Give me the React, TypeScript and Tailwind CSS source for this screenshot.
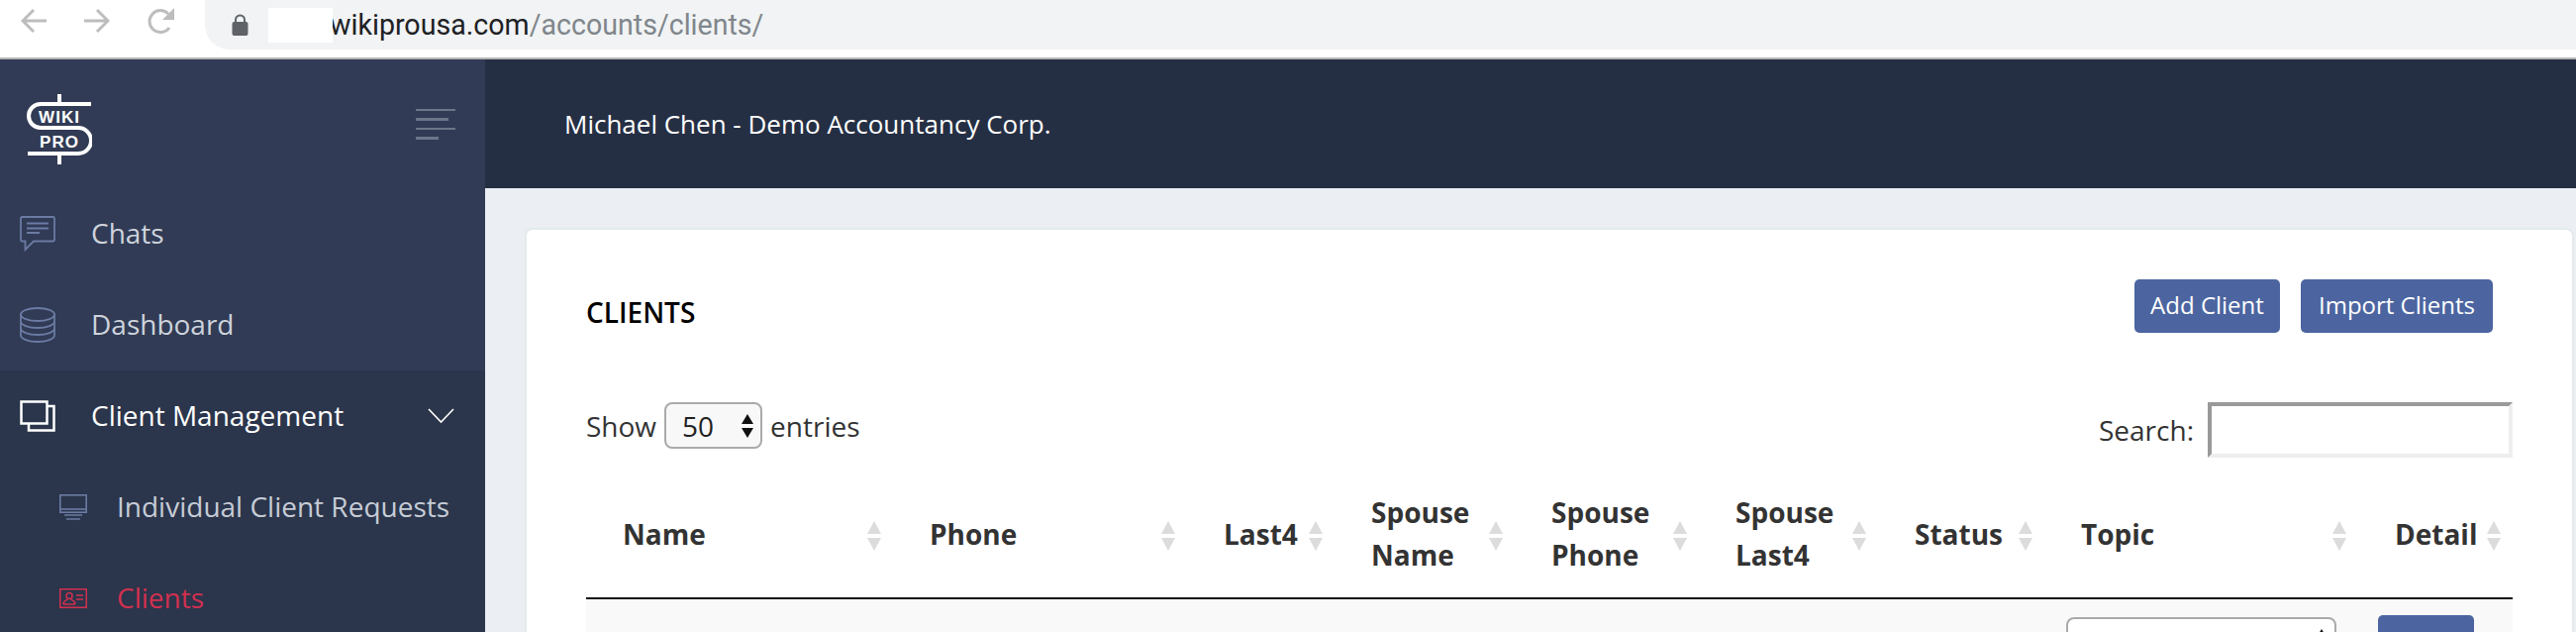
import React from 'react';

const columns = [
  { label: ['Name'], width: 'w-[310px]' },
  { label: ['Phone'], width: 'w-[297px]' },
  { label: ['Last4'], width: 'w-[149px]' },
  { label: ['Spouse', 'Name'], width: 'w-[182px]' },
  { label: ['Spouse', 'Phone'], width: 'w-[186px]' },
  { label: ['Spouse', 'Last4'], width: 'w-[181px]' },
  { label: ['Status'], width: 'w-[168px]' },
  { label: ['Topic'], width: 'w-[317px]' },
  { label: ['Detail'], width: 'w-[156px]' },
];

const SortIcon = () => (
  <svg className="absolute right-[10px] top-[31px]" width="18" height="30" viewBox="0 0 18 30">
    <path d="M9 0 L16 13 H2 Z" fill="#dcdcdc" />
    <path d="M9 30 L16 17 H2 Z" fill="#dcdcdc" />
  </svg>
);

const ChatIcon = () => (
  <svg width="36" height="36" viewBox="0 0 36 36" fill="none" stroke="#6b7ba3" strokeWidth="1.8">
    <path d="M2.5 1 H33.5 Q35 1 35 2.5 V24 Q35 25.5 33.5 25.5 H14 L5.5 34 V25.5 H2.5 Q1 25.5 1 24 V2.5 Q1 1 2.5 1 Z" />
    <path d="M7 7.5 H29 M7 12.5 H29 M7 17 H20" />
  </svg>
);

const DatabaseIcon = () => (
  <svg width="36" height="36" viewBox="0 0 36 36" fill="none" stroke="#6b7ba3" strokeWidth="1.8">
    <ellipse cx="18" cy="7.5" rx="17" ry="6.5" />
    <path d="M1 7.5 V28.5 C1 32 8.5 35 18 35 S35 32 35 28.5 V7.5" />
    <path d="M1 14.5 C1 18 8.5 21 18 21 S35 18 35 14.5" />
    <path d="M1 21.5 C1 25 8.5 28 18 28 S35 25 35 21.5" />
  </svg>
);

const MonitorIcon = () => (
  <svg width="28" height="26" viewBox="0 0 28 26" fill="none" stroke="#6b7ba3" strokeWidth="1.6">
    <rect x="0.8" y="0.8" width="26.4" height="17.4" />
    <path d="M0.8 15 H27.2" />
    <path d="M5 21 H23 M7 25 H21" />
  </svg>
);

const CopyIcon = () => (
  <svg width="36" height="32" viewBox="0 0 36 32" fill="none" stroke="#fff" strokeWidth="2.5">
    <rect x="1.5" y="1.5" width="26" height="22" />
    <path d="M28 6 H34.5 V30.5 H9 V24" />
  </svg>
);

const IdCardIcon = () => (
  <svg width="28" height="20" viewBox="0 0 28 20" fill="none" stroke="#d2304f" strokeWidth="1.5">
    <rect x="0.75" y="0.75" width="26.5" height="18.5" />
    <circle cx="10" cy="7.5" r="3" />
    <path d="M4 16 C4 12 7 12 8.5 11 M16 16 C16 12 13 12 11.5 11 M4 16 H16" />
    <path d="M17 7 H24 M17 11 H24" />
  </svg>
);

const Logo = () => (
  <svg width="66" height="72" viewBox="0 0 66 72" className="ml-[27px] mt-[12px]">
    <path d="M33 0 V10 M33 61 V71" stroke="#fff" strokeWidth="4" fill="none" />
    <path d="M65 10 H14 A12 12 0 0 0 14 34 H52 A13 13 0 0 1 52 60 H1" stroke="#fff" strokeWidth="4" fill="none" />
    <text x="33" y="29" textAnchor="middle" fill="#fff" fontSize="17" letterSpacing="1" fontWeight="700" fontFamily="'Liberation Sans', sans-serif">WIKI</text>
    <text x="33" y="54" textAnchor="middle" fill="#fff" fontSize="17" letterSpacing="1" fontWeight="700" fontFamily="'Liberation Sans', sans-serif">PRO</text>
  </svg>
);

export default function App() {
  return (
    <div className="h-[638px] w-[2602px] overflow-hidden bg-[#ebeef3] font-['Open_Sans',sans-serif] text-[28px] text-[#333]">
      {/* browser chrome */}
      <div className="flex h-[60px] items-start border-b-2 border-[#b5b5b5] bg-white">
        <div className="flex h-[42px] items-center pl-[21px] text-[#bdbdbd]">
          <svg width="26" height="26" viewBox="0 0 26 26" fill="none" stroke="currentColor" strokeWidth="3">
            <path d="M26 13 H2 M13 2 L2 13 L13 24" />
          </svg>
          <svg className="ml-[38px]" width="26" height="26" viewBox="0 0 26 26" fill="none" stroke="currentColor" strokeWidth="3">
            <path d="M0 13 H24 M13 2 L24 13 L13 24" />
          </svg>
          <svg className="ml-[38px]" width="27" height="27" viewBox="0 0 27 27" fill="none">
            <path d="M22 20 A11 11 0 1 1 21 6" stroke="currentColor" strokeWidth="3" />
            <path d="M27 0 V12 H15 Z" fill="currentColor" />
          </svg>
        </div>
        <div className="ml-[31px] flex h-[50px] flex-1 items-center rounded-bl-[25px] bg-[#f1f3f4] pl-[27px]">
          <svg width="17" height="22" viewBox="0 0 17 22" fill="#5f6368">
            <rect x="0.5" y="8" width="16" height="14" rx="2" />
            <path d="M4 9 V6 A4.5 4.5 0 0 1 13 6 V9" fill="none" stroke="#5f6368" strokeWidth="2" />
          </svg>
          <div className="relative z-10 ml-[20px] h-[35px] w-[65px] bg-white" />
          <span className="-ml-[3px] font-['Roboto',sans-serif] text-[28.6px] text-[#202124]">
            wikiprousa.com<span className="text-[#80868b]">/accounts/clients/</span>
          </span>
        </div>
      </div>

      <div className="flex h-[578px]">
        {/* sidebar */}
        <aside className="w-[490px] shrink-0 bg-[#313b55]">
          <div className="flex h-[130px] items-center justify-between pr-[30px]">
            <Logo />
            <div className="flex w-[40px] flex-col gap-[7px]">
              <div className="h-[2.5px] w-[40px] bg-[#6d7589]" />
              <div className="h-[2.5px] w-[33px] bg-[#6d7589]" />
              <div className="h-[2.5px] w-[40px] bg-[#6d7589]" />
              <div className="h-[2.5px] w-[23px] bg-[#6d7589]" />
            </div>
          </div>
          <div className="flex h-[92px] items-center pl-[20px] text-[#ced3dc]">
            <ChatIcon />
            <span className="-mt-[2px] ml-[36px]">Chats</span>
          </div>
          <div className="flex h-[92px] items-center pl-[20px] text-[#ced3dc]">
            <DatabaseIcon />
            <span className="-mt-[2px] ml-[36px]">Dashboard</span>
          </div>
          <div className="bg-[#2b354b]">
            <div className="flex h-[92px] items-center pl-[20px] pr-[31px] text-white">
              <CopyIcon />
              <span className="-mt-[2px] ml-[36px] flex-1">Client Management</span>
              <svg width="27" height="16" viewBox="0 0 27 16" fill="none" stroke="#fff" strokeWidth="1.6">
                <path d="M1 1 L13.5 14 L26 1" />
              </svg>
            </div>
            <div className="flex h-[92px] items-center pl-[60px] text-[#c6ccd6]">
              <MonitorIcon />
              <span className="-mt-[2px] ml-[30px]">Individual Client Requests</span>
            </div>
            <div className="flex h-[92px] items-center pl-[60px] text-[#d2304f]">
              <IdCardIcon />
              <span className="-mt-[2px] ml-[30px]">Clients</span>
            </div>
          </div>
        </aside>

        <main className="min-w-0 flex-1">
          <div className="flex h-[130px] items-center bg-[#252f44] pl-[80px] text-[26px] text-white">
            Michael Chen - Demo Accountancy Corp.
          </div>
          {/* card */}
          <div className="ml-[40px] mr-[2px] mt-[40px] h-[500px] rounded-[8px] border-2 border-[#e4ebec] bg-white px-[60px] pt-[50px]">
            <div className="flex h-[54px] items-center justify-between pr-[20px]">
              <h2 className="mt-[12px] font-semibold text-black">CLIENTS</h2>
              <div className="flex gap-[21px] text-[24px] text-white">
                <button className="h-[54px] w-[147px] rounded-[5px] bg-[#4c65a0] pb-[3px]">Add Client</button>
                <button className="h-[54px] w-[194px] rounded-[5px] bg-[#4c65a0] pb-[3px]">Import Clients</button>
              </div>
            </div>
            <div className="mt-[70px] flex h-[56px] items-start justify-between">
              <label className="flex h-[47px] items-center">
                Show
                <div className="relative mx-[8px] flex h-[47px] w-[99px] items-center rounded-[8px] border-2 border-[#aaa] bg-[#f8f8f8] pl-[16px] text-[#222]">
                  50
                  <svg className="absolute right-[6px] top-[9px]" width="14" height="26" viewBox="0 0 14 26" fill="#111">
                    <path d="M7 1 L13 11 H1 Z M7 25 L13 15 H1 Z" />
                  </svg>
                </div>
                entries
              </label>
              <label className="flex h-[56px] items-center">
                Search:
                <input className="ml-[14px] h-[56px] w-[308px] border-4 border-t-[#999] border-l-[#999] border-r-[#eee] border-b-[#eee] bg-white" />
              </label>
            </div>
            <table className="mt-[33px] w-[1946px] table-fixed border-collapse">
              <colgroup>
                {columns.map(col => <col key={col.label.join()} className={col.width} />)}
              </colgroup>
              <thead>
                <tr className="border-b-2 border-[#111]">
                  {columns.map(col => (
                    <th key={col.label.join()} className="relative h-[109px] pb-[20px] pl-[37px] text-left align-middle text-[28px] leading-[43px] font-bold">
                      {col.label.map(line => <div key={line}>{line}</div>)}
                      <SortIcon />
                    </th>
                  ))}
                </tr>
              </thead>
              <tbody>
                <tr className="bg-[#f9f9f9] align-top leading-[43px] whitespace-nowrap">
                  <td className="h-[100px] pl-[22px] pt-[27px]">Michael Chen</td>
                  <td className="pl-[37px] pt-[27px]">(123) 456-7890</td>
                  <td className="pl-[37px] pt-[27px]">7890</td>
                  <td />
                  <td />
                  <td />
                  <td className="pl-[30px] pt-[27px]">Active</td>
                  <td className="pl-[22px]">
                    <div className="relative mt-[18px] h-[50px] w-[273px] rounded-[8px] border-2 border-[#aaa] bg-white pl-[14px] pt-[7px] leading-[41px]">
                      Select Topic
                      <svg className="absolute right-[6px] top-[9px]" width="14" height="26" viewBox="0 0 14 26" fill="#111">
                        <path d="M7 1 L13 11 H1 Z M7 25 L13 15 H1 Z" />
                      </svg>
                    </div>
                  </td>
                  <td className="pl-[20px]">
                    <div className="mt-[16px] h-[50px] w-[97px] rounded-[5px] bg-[#4c65a0] pt-[9px] text-center text-[24px] leading-[43px] text-white">Detail</div>
                  </td>
                </tr>
              </tbody>
            </table>
          </div>
        </main>
      </div>
    </div>
  );
}
